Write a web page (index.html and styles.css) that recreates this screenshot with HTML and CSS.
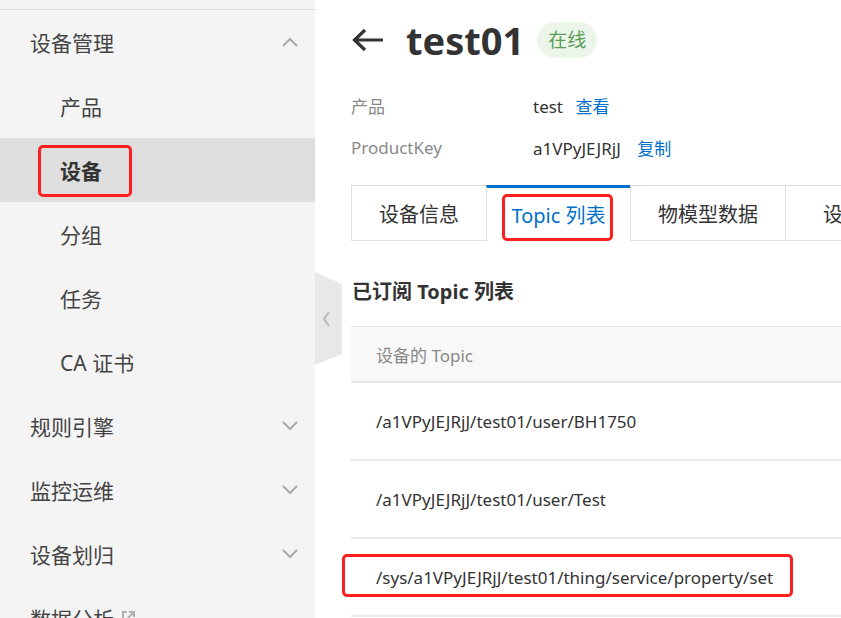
FILE: index.html
```html
<!DOCTYPE html>
<html lang="zh-CN">
<head>
    <meta charset="UTF-8">
    <meta name="viewport" content="width=device-width, initial-scale=1.0">
    <title>test01 - 设备</title>
    <link rel="stylesheet" href="styles.css">
</head>
<body>

<div class="sidebar">
    <ul class="menu">
        <li class="menu-group open">
            <span>设备管理</span>
            <svg class="chev" width="16" height="10" viewBox="0 0 16 10"><polyline points="1,9 8,2 15,9" /></svg>
        </li>
        <li class="menu-item">产品</li>
        <li class="menu-item active"><span class="mark mark-side">设备</span></li>
        <li class="menu-item">分组</li>
        <li class="menu-item">任务</li>
        <li class="menu-item">CA 证书</li>
        <li class="menu-group">
            <span>规则引擎</span>
            <svg class="chev" width="16" height="10" viewBox="0 0 16 10"><polyline points="1,1 8,8 15,1" /></svg>
        </li>
        <li class="menu-group">
            <span>监控运维</span>
            <svg class="chev" width="16" height="10" viewBox="0 0 16 10"><polyline points="1,1 8,8 15,1" /></svg>
        </li>
        <li class="menu-group">
            <span>设备划归</span>
            <svg class="chev" width="16" height="10" viewBox="0 0 16 10"><polyline points="1,1 8,8 15,1" /></svg>
        </li>
        <li class="menu-group">
            <span>数据分析 <svg class="ext" width="15" height="15" viewBox="0 0 15 15"><path d="M6 2H2v11h11V9" /><path d="M8 2h5v5M13 2L7 8" /></svg></span>
        </li>
    </ul>
    <!-- 收起侧栏 -->
    <div class="collapse">
        <svg width="28" height="94" viewBox="0 0 28 94">
            <polygon points="0,0 27,12 27,82 0,93" fill="#e8e8e8" />
            <polyline points="14,40 9,47 14,54" fill="none" stroke="#b8b8b8" stroke-width="2" />
        </svg>
    </div>
</div>

<div class="main">
    <div class="page-head">
        <svg class="back" width="32" height="24" viewBox="0 0 32 24"><path d="M31 12H3M13 2L2.5 12 13 22" /></svg>
        <h1>test01</h1>
        <span class="badge">在线</span>
    </div>

    <div class="info">
        <div class="info-row">
            <span class="info-label">产品</span>
            <span class="info-value">test <a href="#">查看</a></span>
        </div>
        <div class="info-row">
            <span class="info-label">ProductKey</span>
            <span class="info-value">a1VPyJEJRjJ <a href="#" class="copy">复制</a></span>
        </div>
    </div>

    <div class="tabs">
        <div class="tab">设备信息</div>
        <div class="tab active"><span class="mark mark-tab">Topic 列表</span></div>
        <div class="tab">物模型数据</div>
        <div class="tab">设备影子</div>
    </div>

    <h3 class="section-title">已订阅 Topic 列表</h3>

    <table class="topics">
        <thead>
            <tr><th>设备的 Topic</th></tr>
        </thead>
        <tbody>
            <tr><td>/a1VPyJEJRjJ/test01/user/BH1750</td></tr>
            <tr><td>/a1VPyJEJRjJ/test01/user/Test</td></tr>
            <tr><td><span class="mark mark-row">/sys/a1VPyJEJRjJ/test01/thing/service/property/set</span></td></tr>
        </tbody>
    </table>
</div>

</body>
</html>
```

FILE: styles.css
```css
body {
    font-family: "Noto Sans", "Noto Sans CJK SC", sans-serif;
    margin: 0;
    padding: 0;
    background-color: white;
    color: #333;
    display: flex;
    height: 618px;
    overflow: hidden;
}

/* 侧栏 */
.sidebar {
    width: 315px;
    flex-shrink: 0;
    background-color: #f4f4f4;
    position: relative;
}

.menu {
    list-style: none;
    margin: 9px 0 0 0;
    padding: 0;
    border-top: 1px solid #dcdcdc;
}

.menu li {
    height: 64px;
    display: flex;
    align-items: center;
    font-size: 21px;
    color: #444;
}

.menu-group {
    justify-content: space-between;
    padding: 0 17px 0 30px;
}

.menu-item {
    padding-left: 60px;
}

.menu-item.active {
    background-color: #dedede;
    font-weight: bold;
    color: #333;
}

.chev polyline {
    fill: none;
    stroke: #a8a8a8;
    stroke-width: 2;
}

.ext {
    vertical-align: 2px;
    margin-left: 2px;
}

.ext path {
    fill: none;
    stroke: #b0b0b0;
    stroke-width: 2;
}

.collapse {
    position: absolute;
    left: 315px;
    top: 272px;
    width: 28px;
    height: 94px;
}

/* 红框标注 */
.mark {
    position: relative;
}

.mark::after {
    content: "";
    position: absolute;
    border: 3px solid #ff1f1f;
    border-radius: 5px;
}

.mark-side::after {
    left: -22px;
    right: -30px;
    top: -10px;
    bottom: -12px;
}

.mark-tab::after {
    left: -9px;
    right: -7px;
    top: -6px;
    bottom: -12px;
}

.mark-row::after {
    left: -34px;
    right: -20px;
    top: -12px;
    bottom: -8px;
}

/* 主区 */
.main {
    flex: 1;
    padding-left: 36px;
    overflow: hidden;
    min-width: 0;
}

.page-head {
    height: 80px;
    display: flex;
    align-items: center;
}

.back {
    margin-left: 1px;
    margin-right: 22px;
}

.back path {
    fill: none;
    stroke: #333;
    stroke-width: 3.2;
}

.page-head h1 {
    margin: 0;
    font-size: 38px;
    font-weight: bold;
    color: #333;
    line-height: 1;
}

.badge {
    margin-left: 13px;
    background-color: #ebf5ea;
    color: #5b9e58;
    font-size: 19px;
    height: 36px;
    line-height: 36px;
    padding: 0 11px;
    border-radius: 18px;
}

.info {
    margin-top: 4px;
}

.info-row {
    height: 42px;
    display: flex;
    align-items: center;
    font-size: 17px;
}

.info-label {
    width: 182px;
    color: #888;
}

.info-value {
    color: #333;
}

.info-value a {
    color: #0070cc;
    text-decoration: none;
    margin-left: 8px;
}

.info-value a.copy {
    margin-left: 12px;
}

.tabs {
    margin-top: 17px;
    display: flex;
    width: 700px;
    height: 56px;
}

.tab {
    box-sizing: border-box;
    height: 56px;
    border: 1px solid #dedede;
    border-right: none;
    display: flex;
    align-items: center;
    justify-content: center;
    font-size: 20px;
    color: #333;
    flex-shrink: 0;
}

.tab:nth-child(1) { width: 135px; }
.tab:nth-child(2) { width: 144px; }
.tab:nth-child(3) { width: 155px; }
.tab:nth-child(4) { width: 155px; }

.tab.active {
    border-top: 3px solid #0070cc;
    border-bottom: none;
    color: #0070cc;
}

.section-title {
    margin: 36px 0 19px 1px;
    font-size: 20px;
    line-height: 30px;
    font-weight: bold;
    color: #333;
}

.topics {
    width: 700px;
    border-collapse: collapse;
    font-size: 17px;
}

.topics th {
    height: 54px;
    background-color: #f8f8f8;
    border-top: 1px solid #e8e8e8;
    border-bottom: 2px solid #e6e6e6;
    text-align: left;
    font-weight: normal;
    color: #888;
    padding: 0 0 0 25px;
}

.topics td {
    height: 76px;
    border-bottom: 2px solid #ebebeb;
    padding: 0 0 0 25px;
    color: #333;
}
```
